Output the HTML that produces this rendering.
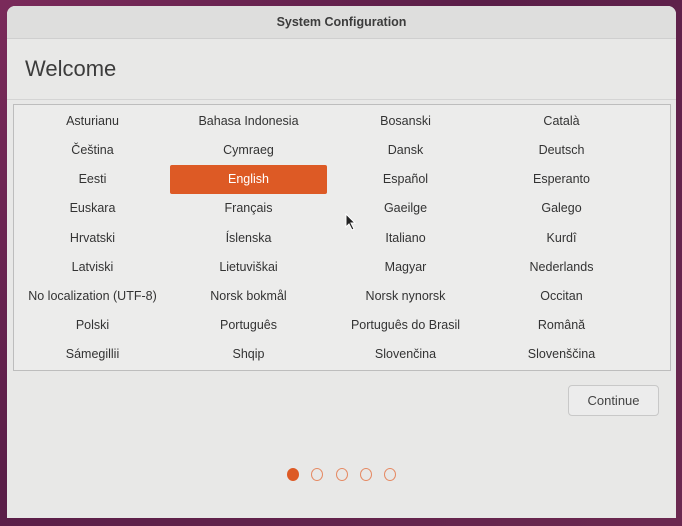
<!DOCTYPE html>
<html><head><style>
body{margin:0;width:682px;height:526px;overflow:hidden;background:linear-gradient(135deg,#7a2a5a,#5a1e48 40%,#6b2850);font-family:"Liberation Sans",sans-serif;position:relative}
.win{position:absolute;left:7px;top:6px;width:669px;height:512px;background:#e8e8e7;border-radius:8px 8px 0 0;overflow:hidden}
.tb{height:32px;background:#dededd;border-bottom:1px solid #cfcfcf;text-align:center;line-height:32px;font-size:12.5px;font-weight:bold;color:#3c3c3c}
.h{position:absolute;left:18px;top:50px;font-size:22px;color:#3c3c3c}
.hl{position:absolute;left:0;right:0;top:93px;border-top:1px solid #d4d4d4}
.list{position:absolute;left:6px;top:98px;width:656px;height:265px;border:1px solid #bdbdbd;background:#ececeb}
.c{position:absolute;width:157px;height:29px;line-height:29px;text-align:center;font-size:12.5px;color:#333}
.sel{background:#dd5a25;color:#fff;border-radius:2px}
.btn{position:absolute;left:561px;top:379px;width:89px;height:29px;border:1px solid #c8c8c8;border-radius:4px;background:#ececec;text-align:center;line-height:29px;font-size:13px;color:#444}
.dot{position:absolute;top:462px;width:12px;height:13px;border-radius:50%;border:1.5px solid #e58a64;box-sizing:border-box}
</style></head><body>
<div class="win">
<div class="tb">System Configuration</div>
<div class="h">Welcome</div>
<div class="hl"></div>
<div class="list"></div>
<div class="btn">Continue</div>
<div class="dot" style="left:280px;background:#dd5a25;border-color:#dd5a25"></div>
<div class="dot" style="left:304px"></div>
<div class="dot" style="left:329px"></div>
<div class="dot" style="left:353px"></div>
<div class="dot" style="left:377px"></div>
</div>
<div style="position:absolute;left:0;top:0">
<div class="c" style="left:14px;top:107px">Asturianu</div><div class="c" style="left:170px;top:107px">Bahasa Indonesia</div><div class="c" style="left:327px;top:107px">Bosanski</div><div class="c" style="left:483px;top:107px">Català</div>
<div class="c" style="left:14px;top:136px">Čeština</div><div class="c" style="left:170px;top:136px">Cymraeg</div><div class="c" style="left:327px;top:136px">Dansk</div><div class="c" style="left:483px;top:136px">Deutsch</div>
<div class="c" style="left:14px;top:165px">Eesti</div><div class="c sel" style="left:170px;top:165px">English</div><div class="c" style="left:327px;top:165px">Español</div><div class="c" style="left:483px;top:165px">Esperanto</div>
<div class="c" style="left:14px;top:194px">Euskara</div><div class="c" style="left:170px;top:194px">Français</div><div class="c" style="left:327px;top:194px">Gaeilge</div><div class="c" style="left:483px;top:194px">Galego</div>
<div class="c" style="left:14px;top:224px">Hrvatski</div><div class="c" style="left:170px;top:224px">Íslenska</div><div class="c" style="left:327px;top:224px">Italiano</div><div class="c" style="left:483px;top:224px">Kurdî</div>
<div class="c" style="left:14px;top:253px">Latviski</div><div class="c" style="left:170px;top:253px">Lietuviškai</div><div class="c" style="left:327px;top:253px">Magyar</div><div class="c" style="left:483px;top:253px">Nederlands</div>
<div class="c" style="left:14px;top:282px">No localization (UTF-8)</div><div class="c" style="left:170px;top:282px">Norsk bokmål</div><div class="c" style="left:327px;top:282px">Norsk nynorsk</div><div class="c" style="left:483px;top:282px">Occitan</div>
<div class="c" style="left:14px;top:311px">Polski</div><div class="c" style="left:170px;top:311px">Português</div><div class="c" style="left:327px;top:311px">Português do Brasil</div><div class="c" style="left:483px;top:311px">Română</div>
<div class="c" style="left:14px;top:340px">Sámegillii</div><div class="c" style="left:170px;top:340px">Shqip</div><div class="c" style="left:327px;top:340px">Slovenčina</div><div class="c" style="left:483px;top:340px">Slovenščina</div>
<svg style="position:absolute;left:345px;top:213px" width="12" height="18"><path d="M1 1 L1 14 L4 11 L7 17 L9 16 L6 10 L10 10 Z" fill="#222" stroke="#fff" stroke-width="1"/></svg>
</div>
</body></html>
